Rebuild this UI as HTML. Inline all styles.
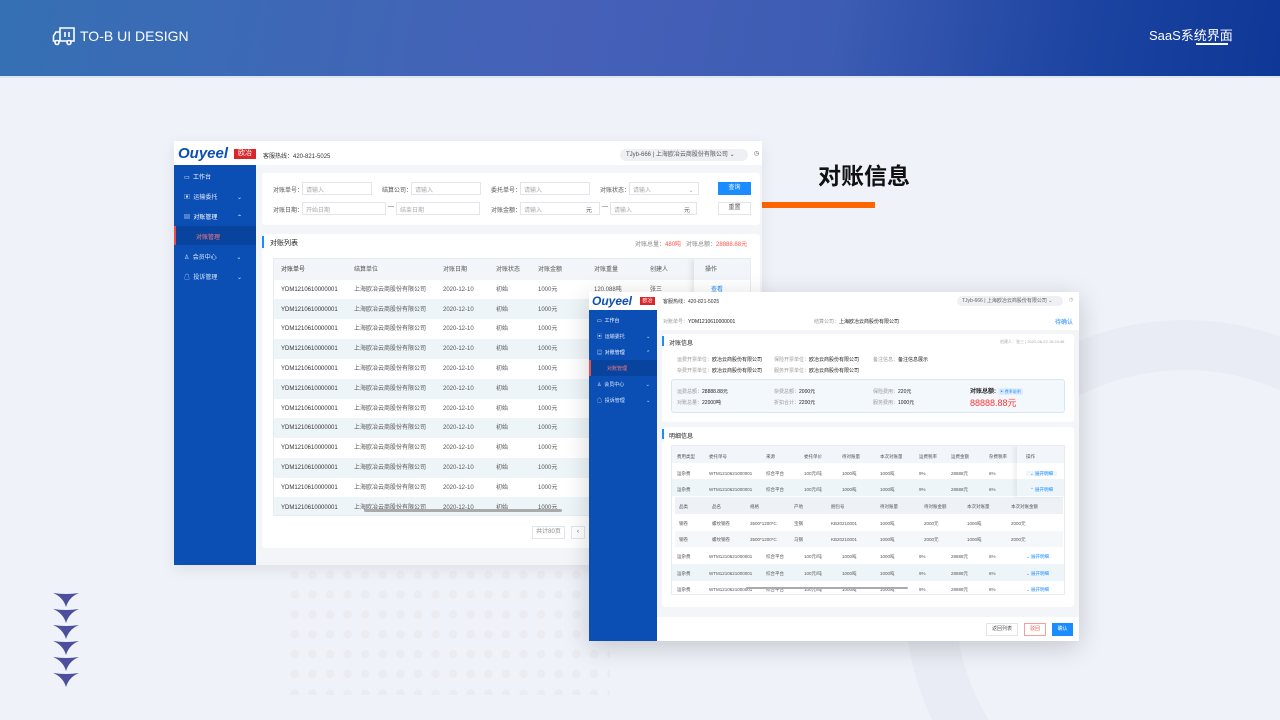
<!DOCTYPE html>
<html style="width:1280px;height:720px;overflow:hidden"><head><meta charset="utf-8"><style>
*{margin:0;padding:0;box-sizing:border-box}
body{width:1280px;height:720px;overflow:hidden;background:#eff2f9;font-family:"Liberation Sans","Noto Sans CJK SC",sans-serif;position:relative;color:#333}
.a{position:absolute;white-space:nowrap}
.hdr{position:absolute;left:0;top:0;width:1280px;height:76px;background:linear-gradient(100deg,#3570b4 0%,#4660b8 45%,#3d5cb3 65%,#1b43a0 85%,#0e3797 100%)}
.t{font-size:6px;color:#555}
.g{color:#aaa}
.sb{background:#0b4fb5}
</style></head><body>
<div class="hdr"></div>
<div class="a" style="left:0;top:76px;width:1280px;height:2px;background:#dde4f2"></div>
<svg class="a" style="left:52px;top:25px" width="24" height="21" viewBox="0 0 24 21" fill="none" stroke="#fff" stroke-width="1.6"><path d="M8 3h14v13H8z"/><path d="M8 7H4L1.5 11v5H8"/><path d="M13 7v5M17 7v5"/><circle cx="5" cy="17.5" r="2" fill="#3d62b5"/><circle cx="17" cy="17.5" r="2" fill="#3d62b5"/></svg>
<div class="a" style="left:80px;top:28px;color:#fff;font-size:14px">TO-B UI DESIGN</div>
<div class="a" style="left:1149px;top:25px;color:#fff;font-size:13px">SaaS系统界面</div>
<div class="a" style="left:1196px;top:43px;width:32px;height:2px;background:#fff"></div>

<svg class="a" style="left:0;top:0" width="1280" height="720"><circle cx="1185" cy="600" r="255" fill="none" stroke="#e9ecf4" stroke-width="50"/></svg>

<div class="a" style="left:290px;top:565px;width:320px;height:130px;background-image:radial-gradient(circle,#ecebf0 4px,transparent 4.5px);background-size:17.6px 19.8px;background-position:-4px 0"></div>

<svg class="a" style="left:52px;top:592px" width="28" height="96" viewBox="0 0 28 96"><g fill="#4e4f9c">
<path id="ar" d="M1 1 Q14 3 27 1 Q17 5 14 15 Q11 5 1 1Z"/>
<use href="#ar" y="16"/><use href="#ar" y="32"/><use href="#ar" y="48"/><use href="#ar" y="64"/><use href="#ar" y="80"/></g></svg>

<div class="a" style="left:818px;top:157px;font-size:23px;font-weight:bold;color:#111">对账信息</div>
<div class="a" style="left:754px;top:202px;width:121px;height:6px;background:#ff6600"></div>

<!-- SCREEN 1 -->
<div class="a" style="left:174px;top:141px;width:588px;height:424px;background:#f3f5f9;box-shadow:0 4px 14px rgba(0,0,0,.08)">
 <div class="a" style="left:0;top:0;width:588px;height:24px;background:#fff"></div>
 <div class="a" style="left:4px;top:4px;font-size:15px;font-weight:bold;font-style:italic;color:#0b4fb5">Ouyeel</div>
 <div class="a" style="left:60px;top:8px;width:22px;height:10px;background:#d9262b;color:#fff;font-size:7px;line-height:10px;text-align:center">欧冶</div>
 <div class="a t" style="left:89px;top:10px;color:#333">客服热线：420-821-5025</div>
 <div class="a t" style="left:446px;top:8px;width:128px;height:12px;border-radius:6px;background:#eef0f3;line-height:12px;padding-left:6px">TJyb-666 | 上海欧冶云商股份有限公司 ⌄</div>
 <div class="a t" style="left:580px;top:9px">◷</div>
 <div class="a sb" style="left:0;top:24px;width:82px;height:400px"></div>
 <div class="a t" style="left:10px;top:31px;color:#fff">▭ &nbsp;工作台</div>
 <div class="a t" style="left:10px;top:51px;color:#dfe8f8">▣ &nbsp;运输委托 <span style="margin-left:18px">⌄</span></div>
 <div class="a t" style="left:10px;top:71px;color:#fff">▤ &nbsp;对账管理 <span style="margin-left:18px">⌃</span></div>
 <div class="a" style="left:0;top:85px;width:82px;height:19px;background:#08439e;border-left:2px solid #e94b4b"></div>
 <div class="a t" style="left:22px;top:91px;color:#ff7b7b">对账管理</div>
 <div class="a t" style="left:10px;top:111px;color:#dfe8f8">♙ &nbsp;会员中心 <span style="margin-left:18px">⌄</span></div>
 <div class="a t" style="left:10px;top:131px;color:#dfe8f8">☖ &nbsp;投诉管理 <span style="margin-left:18px">⌄</span></div>

 <div class="a" style="left:88px;top:32px;width:498px;height:52px;background:#fff;border-radius:3px"></div>
 <div class="a t" style="left:99px;top:44px">对账单号：</div><div class="a t g" style="left:128px;top:41px;width:70px;height:13px;border:1px solid #e2e5ea;padding:2px 3px">请输入</div>
 <div class="a t" style="left:208px;top:44px">结算公司：</div><div class="a t g" style="left:237px;top:41px;width:70px;height:13px;border:1px solid #e2e5ea;padding:2px 3px">请输入</div>
 <div class="a t" style="left:317px;top:44px">委托单号：</div><div class="a t g" style="left:346px;top:41px;width:70px;height:13px;border:1px solid #e2e5ea;padding:2px 3px">请输入</div>
 <div class="a t" style="left:426px;top:44px">对账状态：</div><div class="a t g" style="left:455px;top:41px;width:70px;height:13px;border:1px solid #e2e5ea;padding:2px 3px">请输入 <span style="margin-left:36px">⌄</span></div>
 <div class="a t" style="left:544px;top:41px;width:33px;height:13px;background:#1a8cff;color:#fff;text-align:center;line-height:13px">查询</div>
 <div class="a t" style="left:99px;top:64px">对账日期：</div><div class="a t g" style="left:128px;top:61px;width:84px;height:13px;border:1px solid #e2e5ea;padding:2px 3px">开始日期</div>
 <div class="a t" style="left:214px;top:63px">—</div><div class="a t g" style="left:222px;top:61px;width:84px;height:13px;border:1px solid #e2e5ea;padding:2px 3px">结束日期</div>
 <div class="a t" style="left:317px;top:64px">对账金额：</div><div class="a t g" style="left:346px;top:61px;width:80px;height:13px;border:1px solid #e2e5ea;padding:2px 3px">请输入<span style="margin-left:44px;color:#555">元</span></div>
 <div class="a t" style="left:428px;top:63px">—</div><div class="a t g" style="left:436px;top:61px;width:87px;height:13px;border:1px solid #e2e5ea;padding:2px 3px">请输入<span style="margin-left:52px;color:#555">元</span></div>
 <div class="a t" style="left:544px;top:61px;width:33px;height:13px;border:1px solid #e2e5ea;background:#fff;text-align:center;line-height:11px">重置</div>

 <div class="a" style="left:88px;top:93px;width:498px;height:314px;background:#fff;border-radius:3px"></div>
 <div class="a" style="left:88px;top:95px;width:2px;height:12px;background:#1a8cff"></div>
 <div class="a" style="left:96px;top:97px;font-size:7px;color:#222">对账列表</div>
 <div class="a t" style="left:461px;top:98px;color:#888">对账总量：<span style="color:#f54">480吨</span> &nbsp; 对账总额：<span style="color:#f54">28888.88元</span></div>
 <div class="a" style="left:99px;top:117px;width:478px;height:258px;border:1px solid #e8ecf1;overflow:hidden">
  <div class="a" style="left:0;top:0;width:478px;height:21px;background:#f2f5f9"></div>
  <div class="a" style="left:0;top:40px;width:478px;height:20px;background:#eef5f9"></div>
  <div class="a" style="left:0;top:80px;width:478px;height:20px;background:#eef5f9"></div>
  <div class="a" style="left:0;top:120px;width:478px;height:20px;background:#eef5f9"></div>
  <div class="a" style="left:0;top:159px;width:478px;height:20px;background:#eef5f9"></div>
  <div class="a" style="left:0;top:199px;width:478px;height:20px;background:#eef5f9"></div>
  <div class="a" style="left:0;top:238px;width:478px;height:20px;background:#eef5f9"></div>
  <div class="a" style="left:420px;top:0;width:58px;height:258px;box-shadow:-3px 0 5px rgba(0,0,0,.08)"></div>
  <div class="a t" style="left:7px;top:2px;color:#333;line-height:19.8px">对账单号<br>YDM1210610000001<br>YDM1210610000001<br>YDM1210610000001<br>YDM1210610000001<br>YDM1210610000001<br>YDM1210610000001<br>YDM1210610000001<br>YDM1210610000001<br>YDM1210610000001<br>YDM1210610000001<br>YDM1210610000001<br>YDM1210610000001</div>
  <div class="a t" style="left:80px;top:2px;line-height:19.8px">结算单位<br>上海欧冶云商股份有限公司<br>上海欧冶云商股份有限公司<br>上海欧冶云商股份有限公司<br>上海欧冶云商股份有限公司<br>上海欧冶云商股份有限公司<br>上海欧冶云商股份有限公司<br>上海欧冶云商股份有限公司<br>上海欧冶云商股份有限公司<br>上海欧冶云商股份有限公司<br>上海欧冶云商股份有限公司<br>上海欧冶云商股份有限公司<br>上海欧冶云商股份有限公司</div>
  <div class="a t" style="left:169px;top:2px;line-height:19.8px">对账日期<br>2020-12-10<br>2020-12-10<br>2020-12-10<br>2020-12-10<br>2020-12-10<br>2020-12-10<br>2020-12-10<br>2020-12-10<br>2020-12-10<br>2020-12-10<br>2020-12-10<br>2020-12-10</div>
  <div class="a t" style="left:222px;top:2px;line-height:19.8px">对账状态<br>初始<br>初始<br>初始<br>初始<br>初始<br>初始<br>初始<br>初始<br>初始<br>初始<br>初始<br>初始</div>
  <div class="a t" style="left:264px;top:2px;line-height:19.8px">对账金额<br>1000元<br>1000元<br>1000元<br>1000元<br>1000元<br>1000元<br>1000元<br>1000元<br>1000元<br>1000元<br>1000元<br>1000元</div>
  <div class="a t" style="left:320px;top:2px;line-height:19.8px">对账重量<br>120.088吨</div>
  <div class="a t" style="left:376px;top:2px;line-height:19.8px">创建人<br>张三</div>
  <div class="a t" style="left:431px;top:2px;line-height:19.8px">操作<br><span style="color:#1a8cff;margin-left:6px">查看</span></div>
  <div class="a" style="left:90px;top:250px;width:198px;height:3px;border-radius:2px;background:#aaa"></div>
 </div>
 <div class="a t" style="left:358px;top:385px;width:33px;height:13px;border:1px solid #e2e5ea;color:#888;text-align:center;line-height:11px">共计80页</div>
 <div class="a t" style="left:397px;top:385px;width:14px;height:13px;border:1px solid #e2e5ea;text-align:center;line-height:11px">‹</div>
</div>

<!-- SCREEN 2 -->
<div class="a" style="left:589px;top:292px;width:490px;height:349px;background:#f3f5f9;box-shadow:0 6px 24px rgba(0,0,0,.18)">
 <div class="a" style="left:0;top:0;width:490px;height:18px;background:#fff"></div>
 <div class="a" style="left:3px;top:2px;font-size:12px;font-weight:bold;font-style:italic;color:#0b4fb5">Ouyeel</div>
 <div class="a" style="left:51px;top:5px;width:15px;height:8px;background:#d9262b;color:#fff;font-size:5px;line-height:8px;text-align:center">欧冶</div>
 <div class="a" style="left:74px;top:6px;font-size:5px;color:#333">客服热线：420-821-5025</div>
 <div class="a" style="left:368px;top:4px;width:106px;height:10px;border-radius:5px;background:#eef0f3;font-size:5px;line-height:10px;padding-left:5px;color:#666">TJyb-666 | 上海欧冶云商股份有限公司 ⌄</div>
 <div class="a" style="left:480px;top:5px;font-size:5px;color:#999">◷</div>
 <div class="a sb" style="left:0;top:18px;width:68px;height:331px"></div>
 <div class="a" style="left:8px;top:25px;font-size:5px;color:#fff">▭ &nbsp;工作台</div>
 <div class="a" style="left:8px;top:41px;font-size:5px;color:#dfe8f8">▣ &nbsp;运输委托 <span style="margin-left:20px">⌄</span></div>
 <div class="a" style="left:8px;top:57px;font-size:5px;color:#fff">▤ &nbsp;对账管理 <span style="margin-left:20px">⌃</span></div>
 <div class="a" style="left:0;top:68px;width:68px;height:16px;background:#08439e;border-left:2px solid #e94b4b"></div>
 <div class="a" style="left:18px;top:73px;font-size:5px;color:#ff7b7b">对账管理</div>
 <div class="a" style="left:8px;top:89px;font-size:5px;color:#dfe8f8">♙ &nbsp;会员中心 <span style="margin-left:20px">⌄</span></div>
 <div class="a" style="left:8px;top:105px;font-size:5px;color:#dfe8f8">☖ &nbsp;投诉管理 <span style="margin-left:20px">⌄</span></div>

 <div class="a" style="left:68px;top:18px;width:422px;height:20px;background:#fff"></div>
 <div class="a" style="left:74px;top:26px;font-size:5px;color:#999">对账单号：<span style="color:#222">YDM1210610000001</span></div>
 <div class="a" style="left:225px;top:26px;font-size:5px;color:#999">结算公司：<span style="color:#222">上海欧冶云商股份有限公司</span></div>
 <div class="a" style="left:466px;top:25px;font-size:6px;color:#1a8cff">待确认</div>

 <div class="a" style="left:73px;top:42px;width:412px;height:88px;background:#fff;border-radius:3px"></div>
 <div class="a" style="left:73px;top:44px;width:2px;height:10px;background:#1a8cff"></div>
 <div class="a" style="left:80px;top:46px;font-size:6px;color:#222">对账信息</div>
 <div class="a" style="left:411px;top:47px;font-size:4px;color:#aaa">创建人：张三 | 2021-06-22 16:24:48</div>
 <div class="a" style="left:88px;top:63px;font-size:5px;color:#999;line-height:10.5px">运费开票单位：<span style="color:#222">欧冶云商股份有限公司</span><br>杂费开票单位：<span style="color:#222">欧冶云商股份有限公司</span></div>
 <div class="a" style="left:185px;top:63px;font-size:5px;color:#999;line-height:10.5px">保险开票单位：<span style="color:#222">欧冶云商股份有限公司</span><br>服务开票单位：<span style="color:#222">欧冶云商股份有限公司</span></div>
 <div class="a" style="left:284px;top:63px;font-size:5px;color:#999;line-height:10.5px">备注信息：<span style="color:#222">备注信息展示</span></div>
 <div class="a" style="left:82px;top:87px;width:394px;height:34px;background:#f3f8fd;border:1px solid #d6e6f7;border-radius:3px"></div>
 <div class="a" style="left:88px;top:95px;font-size:5px;color:#999;line-height:11px">运费总额：<span style="color:#222">28888.88元</span><br>对账总量：<span style="color:#222">22000吨</span></div>
 <div class="a" style="left:185px;top:95px;font-size:5px;color:#999;line-height:11px">杂费总额：<span style="color:#222">2000元</span><br>折扣合计：<span style="color:#222">2200元</span></div>
 <div class="a" style="left:284px;top:95px;font-size:5px;color:#999;line-height:11px">保险费用：<span style="color:#222">220元</span><br>服务费用：<span style="color:#222">1000元</span></div>
 <div class="a" style="left:381px;top:94px;font-size:6px;font-weight:bold;color:#222">对账总额: <span style="font-weight:normal;font-size:4px;color:#1a8cff;background:#e3efff;padding:1px 2px">▣ 费率说明</span></div>
 <div class="a" style="left:381px;top:104px;font-size:9px;color:#f33">88888.88元</div>

 <div class="a" style="left:73px;top:135px;width:412px;height:180px;background:#fff;border-radius:3px"></div>
 <div class="a" style="left:73px;top:137px;width:2px;height:10px;background:#1a8cff"></div>
 <div class="a" style="left:80px;top:139px;font-size:6px;color:#222">明细信息</div>
 <div class="a" style="left:82px;top:153px;width:394px;height:150px;border:1px solid #e8ecf1;overflow:hidden">
  <div class="a" style="left:0;top:0;width:394px;height:17px;background:#f2f5f9"></div>
  <div class="a" style="left:0;top:33px;width:394px;height:17px;background:#eef5f9"></div>
  <div class="a" style="left:3px;top:51px;width:388px;height:17px;background:#eef2f6"></div>
  <div class="a" style="left:3px;top:68px;width:388px;height:33px;background:#f5f8fb"></div>
  <div class="a" style="left:3px;top:68px;width:388px;height:17px;background:#fff"></div>
  <div class="a" style="left:0;top:118px;width:394px;height:17px;background:#eef5f9"></div>
  <div class="a" style="left:345px;top:0;width:49px;height:51px;box-shadow:-3px 0 4px rgba(0,0,0,.06)"></div>
  <div class="a" style="left:5px;top:3px;font-size:4.5px;color:#555;line-height:16.6px">费用类型<br>运杂费<br>运杂费</div>
  <div class="a" style="left:37px;top:3px;font-size:4.5px;color:#555;line-height:16.6px">委托单号<br>WTM1210621000001<br>WTM1210621000001</div>
  <div class="a" style="left:94px;top:3px;font-size:4.5px;color:#555;line-height:16.6px">来源<br>综合平台<br>综合平台</div>
  <div class="a" style="left:132px;top:3px;font-size:4.5px;color:#555;line-height:16.6px">委托单价<br>100元/吨<br>100元/吨</div>
  <div class="a" style="left:170px;top:3px;font-size:4.5px;color:#555;line-height:16.6px">待对账量<br>1000吨<br>1000吨</div>
  <div class="a" style="left:208px;top:3px;font-size:4.5px;color:#555;line-height:16.6px">本次对账量<br>1000吨<br>1000吨</div>
  <div class="a" style="left:247px;top:3px;font-size:4.5px;color:#555;line-height:16.6px">运费税率<br>9%<br>9%</div>
  <div class="a" style="left:279px;top:3px;font-size:4.5px;color:#555;line-height:16.6px">运费金额<br>28888元<br>28888元</div>
  <div class="a" style="left:317px;top:3px;font-size:4.5px;color:#555;line-height:16.6px">杂费税率<br>6%<br>6%</div>
  <div class="a" style="left:354px;top:3px;font-size:4.5px;color:#555;line-height:16.6px">操作<br><span style="color:#1a8cff;background:#eef5fd;padding:0 4px">⌄ 展开明细</span><br><span style="color:#1a8cff;padding:0 4px">⌃ 展开明细</span></div>
  <div class="a" style="left:7px;top:53px;font-size:4.5px;color:#555;line-height:16.6px">品类<br>钢卷<br>钢卷</div>
  <div class="a" style="left:40px;top:53px;font-size:4.5px;color:#555;line-height:16.6px">品名<br>螺纹钢卷<br>螺纹钢卷</div>
  <div class="a" style="left:78px;top:53px;font-size:4.5px;color:#555;line-height:16.6px">规格<br>3500*1200*C<br>3500*1200*C</div>
  <div class="a" style="left:122px;top:53px;font-size:4.5px;color:#555;line-height:16.6px">产地<br>宝钢<br>马钢</div>
  <div class="a" style="left:159px;top:53px;font-size:4.5px;color:#555;line-height:16.6px">捆包号<br>KB20210001<br>KB20210001</div>
  <div class="a" style="left:208px;top:53px;font-size:4.5px;color:#555;line-height:16.6px">待对账量<br>1000吨<br>1000吨</div>
  <div class="a" style="left:252px;top:53px;font-size:4.5px;color:#555;line-height:16.6px">待对账金额<br>2000元<br>2000元</div>
  <div class="a" style="left:295px;top:53px;font-size:4.5px;color:#555;line-height:16.6px">本次对账量<br>1000吨<br>1000吨</div>
  <div class="a" style="left:339px;top:53px;font-size:4.5px;color:#555;line-height:16.6px">本次对账金额<br>2000元<br>2000元</div>
  <div class="a" style="left:5px;top:103px;font-size:4.5px;color:#555;line-height:16.6px">运杂费<br>运杂费<br>运杂费</div>
  <div class="a" style="left:37px;top:103px;font-size:4.5px;color:#555;line-height:16.6px">WTM1210621000001<br>WTM1210621000001<br>WTM1210621000001</div>
  <div class="a" style="left:94px;top:103px;font-size:4.5px;color:#555;line-height:16.6px">综合平台<br>综合平台<br>综合平台</div>
  <div class="a" style="left:132px;top:103px;font-size:4.5px;color:#555;line-height:16.6px">100元/吨<br>100元/吨<br>100元/吨</div>
  <div class="a" style="left:170px;top:103px;font-size:4.5px;color:#555;line-height:16.6px">1000吨<br>1000吨<br>1000吨</div>
  <div class="a" style="left:208px;top:103px;font-size:4.5px;color:#555;line-height:16.6px">1000吨<br>1000吨<br>1000吨</div>
  <div class="a" style="left:247px;top:103px;font-size:4.5px;color:#555;line-height:16.6px">9%<br>9%<br>9%</div>
  <div class="a" style="left:279px;top:103px;font-size:4.5px;color:#555;line-height:16.6px">28888元<br>28888元<br>28888元</div>
  <div class="a" style="left:317px;top:103px;font-size:4.5px;color:#555;line-height:16.6px">6%<br>6%<br>6%</div>
  <div class="a" style="left:354px;top:103px;font-size:4.5px;color:#1a8cff;line-height:16.6px">⌄ 展开明细<br>⌄ 展开明细<br>⌄ 展开明细</div>
  <div class="a" style="left:74px;top:141px;width:162px;height:2px;border-radius:1px;background:#aaa"></div>
 </div>
 <div class="a" style="left:68px;top:325px;width:422px;height:24px;background:#fff"></div>
 <div class="a" style="left:397px;top:331px;width:32px;height:13px;border:1px solid #e2e5ea;font-size:5px;line-height:11px;text-align:center;color:#555">返回列表</div>
 <div class="a" style="left:435px;top:331px;width:22px;height:13px;border:1px solid #f4a0a0;font-size:5px;line-height:11px;text-align:center;color:#f55">驳回</div>
 <div class="a" style="left:463px;top:331px;width:21px;height:13px;background:#1a8cff;font-size:5px;line-height:13px;text-align:center;color:#fff">确认</div>
</div>
</body></html>
